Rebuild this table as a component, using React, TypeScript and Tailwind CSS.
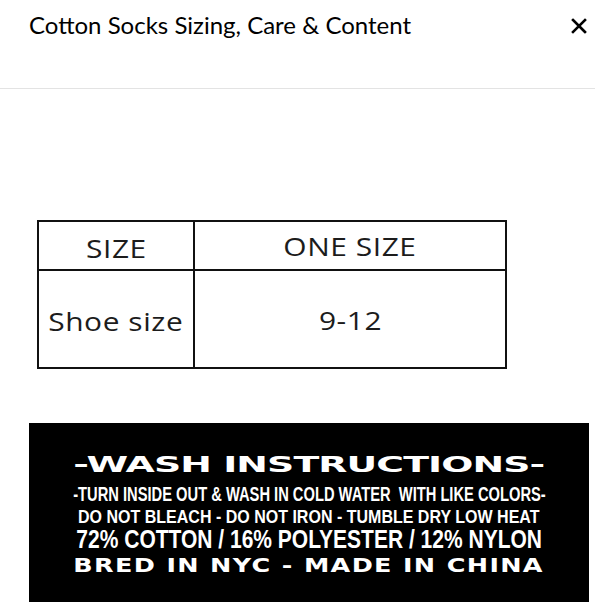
export default function App() {
  return (
    <div className="w-[595px] h-[610px] bg-white overflow-hidden">
      {/* Header */}
      <div className="h-[89px] border-b border-[#e3e3e3] flex items-start justify-between pl-[29px] pr-[8px] pt-[10px]">
        <h2 className="text-[24px] text-black font-['Lato',sans-serif] leading-[30px]">
          Cotton Socks Sizing, Care &amp; Content
        </h2>
        <button className="mt-[8px] text-black">
          <svg width="16" height="16" viewBox="0 0 16 16" fill="none" stroke="currentColor" strokeWidth="2.6" strokeLinecap="square">
            <path d="M2 2L14 14M14 2L2 14" />
          </svg>
        </button>
      </div>

      {/* Size chart */}
      <div className="pt-[131px] pl-[37px]">
        <table className="w-[470px] border-collapse border-2 border-[#111] text-[#1c1c1c] font-['Open_Sans',sans-serif] text-[26px] tracking-[0.5px]">
          <tbody>
            <tr className="h-[49px]">
              <td className="w-[156px] border-2 border-[#111] text-center leading-none pt-[5px]">
                <span className="inline-block scale-x-[1.15]">SIZE</span>
              </td>
              <td className="border-2 border-[#111] text-center leading-none">
                <span className="inline-block scale-x-[1.15]">ONE SIZE</span>
              </td>
            </tr>
            <tr className="h-[98px]">
              <td className="border-2 border-[#111] text-center leading-none pt-[4px] whitespace-nowrap">
                <span className="inline-block scale-x-[1.15]">Shoe size</span>
              </td>
              <td className="border-2 border-[#111] text-center leading-none pt-[2px]">
                <span className="inline-block scale-x-[1.15]">9-12</span>
              </td>
            </tr>
          </tbody>
        </table>
      </div>

      {/* Wash label */}
      <div className="mt-[54px] ml-[29px] w-[560px] h-[179px] bg-black text-white flex flex-col items-center pt-[29px] whitespace-nowrap">
        <div className="h-[27px] leading-[27px] font-['DejaVu_Sans',sans-serif] font-bold text-[21px] tracking-[-0.5px] scale-x-[1.8]">
          -WASH INSTRUCTIONS-
        </div>
        <div className="h-[30px] leading-[30px] font-['Liberation_Sans',sans-serif] font-bold text-[20px] scale-x-[0.735]">
          -TURN INSIDE OUT &amp; WASH IN COLD WATER&nbsp; WITH LIKE COLORS-
        </div>
        <div className="h-[15px] leading-[15px] font-['Liberation_Sans',sans-serif] font-bold text-[19px] scale-x-[0.843]">
          DO NOT BLEACH - DO NOT IRON - TUMBLE DRY LOW HEAT
        </div>
        <div className="h-[30px] leading-[30px] font-['Liberation_Sans',sans-serif] font-bold text-[25px] scale-x-[0.84]">
          72% COTTON / 16% POLYESTER / 12% NYLON
        </div>
        <div className="h-[22px] leading-[22px] font-['DejaVu_Sans',sans-serif] font-bold text-[19px] tracking-[1px] scale-x-[1.34]">
          BRED IN NYC - MADE IN CHINA
        </div>
      </div>
    </div>
  );
}
